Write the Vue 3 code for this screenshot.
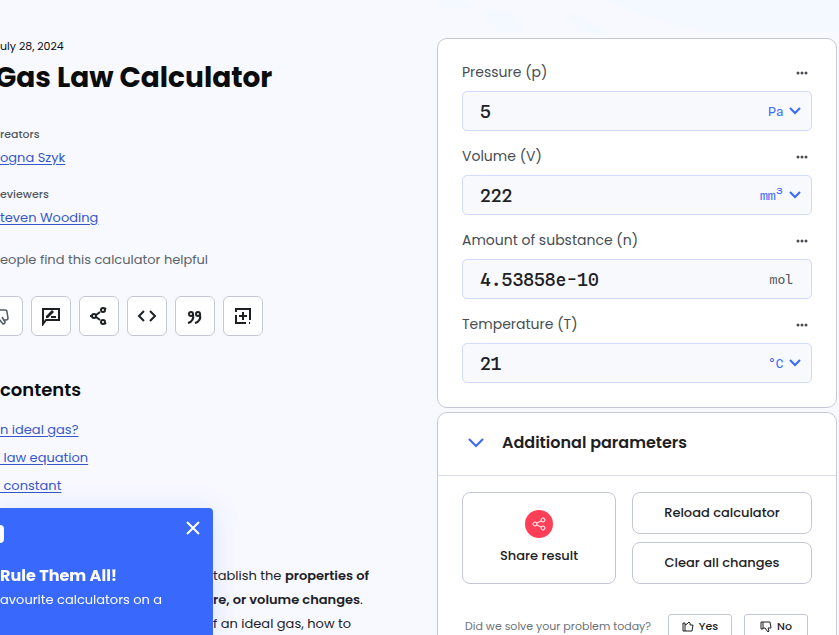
<script setup>
import { reactive } from 'vue'

const fields = reactive([
  { id: 'pressure', label: 'Pressure (p)', value: '5', unit: 'Pa', select: true },
  { id: 'volume', label: 'Volume (V)', value: '222', unit: 'mm³', select: true },
  { id: 'amount', label: 'Amount of substance (n)', value: '4.53858e-10', unit: 'mol', select: false },
  { id: 'temperature', label: 'Temperature (T)', value: '21', unit: '°C', select: true }
])
const links = ['n ideal gas?', '\u00a0law equation', '\u00a0constant']
</script>

<template>
  <div class="page">
    <svg class="backdrop" viewBox="0 0 402 38" aria-hidden="true">
      <path d="M0 0h28l10 9H10zM43 10h30l15 23H63zM128 14l18 2 24 18h-24zM171 0h231v31H263l-60-16z" />
    </svg>
    <main class="article">
      <p class="date">uly 28, 2024</p>
      <h1>Gas Law Calculator</h1>
      <div class="person">
        <span class="role">reators</span>
        <a href="#">ogna Szyk</a>
      </div>
      <div class="person">
        <span class="role">eviewers</span>
        <a href="#">teven Wooding</a>
      </div>
      <p class="helpful">eople find this calculator helpful</p>
      <div class="actions">
        <button class="cut" aria-label="Dislike">
          <svg viewBox="0 0 20 20"><path d="M1 4h14q2 0 2 2l1 6q0 2-2 2h-2M12 11l3 5q0 2-2 2l-4-5" /></svg>
        </button>
        <button aria-label="Feedback">
          <svg viewBox="0 0 20 20"><path d="M2 18V3h16v11H5z" /><path class="solid" d="M5 12v-2l6-6 2 2-6 6z" /><path d="M10 11h5" /></svg>
        </button>
        <button aria-label="Share">
          <svg viewBox="0 0 20 20"><circle cx="5" cy="10" r="2" /><circle cx="14" cy="4" r="2" /><circle cx="14" cy="16" r="2" /><path d="M1 10h2M7 9l4-3M7 11l4 3M16 3l1-1M16 17l1 1" /></svg>
        </button>
        <button aria-label="Embed">
          <svg viewBox="0 0 20 20"><path d="M7 5l-5 5 5 5M13 5l5 5-5 5" /></svg>
        </button>
        <button aria-label="Cite">
          <svg viewBox="0 0 20 20"><circle cx="6" cy="8" r="2" /><circle cx="13" cy="8" r="2" /><path d="M8 8c1 5-1 8-5 9M15 8c1 5-1 8-5 9" /></svg>
        </button>
        <button aria-label="Add to collection">
          <svg viewBox="0 0 20 20"><path d="M3 6V3h14v11M17 17h-1M13 17H3V9M10 6v8M6 10h8" /></svg>
        </button>
      </div>
      <h2>contents</h2>
      <nav>
        <a v-for="l in links" :key="l" href="#">{{ l }}</a>
      </nav>
      <p class="intro">
        tablish the <b>properties of</b><br />
        <b>re, or volume changes</b>.<br />
        f an ideal gas, how to
      </p>
    </main>

    <aside class="calculator">
      <section class="card fields">
        <div v-for="f in fields" :key="f.id" class="field">
          <div class="head">
            <label :for="f.id">{{ f.label }}</label>
            <button class="more" :aria-label="f.label + ' options'">
              <svg viewBox="0 0 12 4"><circle cx="2" cy="2" r="1.5" /><circle cx="6" cy="2" r="1.5" /><circle cx="10" cy="2" r="1.5" /></svg>
            </button>
          </div>
          <div class="box">
            <input :id="f.id" v-model="f.value" type="text" />
            <template v-if="f.select">
              <select v-model="f.unit" :aria-label="f.label + ' unit'">
                <option>{{ f.unit }}</option>
              </select>
              <svg class="chev" viewBox="0 0 12 8"><path d="M1 1l5 5 5-5" /></svg>
            </template>
            <span v-else class="unit">{{ f.unit }}</span>
          </div>
        </div>
      </section>

      <section class="card">
        <button class="toggle">
          <svg viewBox="0 0 16 10"><path d="M1 1l7 7 7-7" /></svg>
          Additional parameters
        </button>
        <div class="tools">
          <button class="share">
            <span class="dot">
              <svg viewBox="0 0 14 14"><circle cx="3" cy="7" r="2" /><circle cx="11" cy="3" r="2" /><circle cx="11" cy="11" r="2" /><path d="M5 6l4-2M5 8l4 2" /></svg>
            </span>
            Share result
          </button>
          <button>Reload calculator</button>
          <button>Clear all changes</button>
        </div>
        <div class="survey">
          <span>Did we solve your problem today?</span>
          <button>
            <svg viewBox="0 0 12 12"><path d="M1 2h2v8H1zM3 4l2-1 2-2 1 1v2h3l-1 6H3" /></svg>
            Yes
          </button>
          <button>
            <svg viewBox="0 0 12 12"><path d="M1 1h2v7H1zM3 1h7l1 6H8l1 3-1 1-3-4H3" /></svg>
            No
          </button>
        </div>
      </section>
    </aside>

    <div class="promo" role="dialog" aria-label="Rule Them All!">
      <div class="promo-top">
        <span class="badge"></span>
        <button aria-label="Close">
          <svg viewBox="0 0 14 14"><path d="M1 1l12 12M13 1L1 13" /></svg>
        </button>
      </div>
      <strong>Rule Them All!</strong>
      <span>avourite calculators on a</span>
    </div>
  </div>
</template>

<style>
body {
  margin: 0;
  background: #f8f9ff;
  overflow: hidden;
}
</style>

<style scoped>
.page {
  position: relative;
  display: grid;
  grid-template-columns: minmax(0, 1fr) 400px;
  gap: 24px;
  height: 100vh;
  padding: 38px 2px 0 0;
  box-sizing: border-box;
  overflow: hidden;
  font-family: Poppins, Inter, sans-serif;
  font-size: 13px;
  color: #1d2124;
}
p, h1, h2 { margin: 0; }
button {
  font: inherit;
  color: inherit;
  background: #fff;
  border: 1px solid #c4c7d8;
  border-radius: 6px;
  padding: 0;
  cursor: pointer;
}
svg {
  display: block;
  flex: none;
  fill: none;
  stroke: currentColor;
}
a {
  color: #3557cb;
  text-underline-offset: 2px;
}
.backdrop {
  position: absolute;
  top: 0;
  right: 0;
  width: 402px;
  height: 38px;
  fill: #f4f8ff;
  stroke: none;
}
.date { font-size: 11px; line-height: 16px; color: #0b0c0d; }
h1 {
  margin: 4px 0 27px;
  font-size: 28px;
  line-height: 40px;
  font-weight: 700;
  color: #0b0c0d;
  white-space: nowrap;
  text-indent: -5px;
}
.person {
  display: flex;
  flex-direction: column;
  gap: 3px;
  height: 60px;
}
.person a { line-height: 24px; }
.role { font-size: 11px; line-height: 18px; font-weight: 500; color: #535a60; }
.helpful { line-height: 24px; margin-top: 3px; color: #5b6268; }
.actions { display: flex; gap: 8px; margin-top: 24px; }
.actions button {
  display: flex;
  align-items: center;
  justify-content: center;
  width: 40px;
  height: 40px;
}
.actions svg { width: 20px; height: 20px; stroke-width: 2; }
.actions .cut {
  width: 23px;
  justify-content: flex-end;
  padding-right: 12px;
  border-left: 0;
  border-radius: 0 6px 6px 0;
  overflow: hidden;
  color: #535a60;
}
.actions .cut svg { stroke-width: 1.5; }
.solid { fill: currentColor; stroke: none; }
h2 { margin-top: 39px; font-size: 18px; line-height: 30px; font-weight: 600; color: #0b0c0d; }
nav { display: flex; flex-direction: column; gap: 4px; margin-top: 13px; }
nav a { line-height: 24px; }
.intro {
  margin-top: 66px;
  padding-left: 213px;
  line-height: 24px;
  white-space: nowrap;
}
b { font-weight: 600; }

.calculator { position: relative; display: flex; flex-direction: column; gap: 4px; }
.card { background: #fff; border: 1px solid #c4c7d8; border-radius: 10px; }
.fields { display: flex; flex-direction: column; gap: 16px; padding: 24px; }
.field { display: flex; flex-direction: column; gap: 8px; }
.head { display: flex; justify-content: space-between; align-items: center; height: 20px; }
.head label { color: #474d52; font-size: 14px; line-height: 18px; padding-bottom: 2px; }
.more { border: 0; padding: 4px; color: #474d52; }
.more svg { width: 12px; height: 4px; fill: currentColor; stroke: none; }
.box {
  display: flex;
  align-items: center;
  box-sizing: border-box;
  height: 40px;
  padding: 0 10px 0 17px;
  background: #f8f9fc;
  border: 1px solid #d0dbfe;
  border-radius: 5px;
  font-family: "Spline Sans Mono", "Space Mono", "DejaVu Sans Mono", "Liberation Mono", monospace;
}
.box input {
  flex: 1;
  min-width: 0;
  padding: 0;
  border: 0;
  background: none;
  font: inherit;
  font-size: 18px;
  font-weight: 500;
  color: #1d2124;
  outline: 0;
}
.box select {
  appearance: none;
  border: 0;
  padding: 0 5px 0 0;
  background: none;
  font: inherit;
  color: #3968fd;
}
.chev { width: 12px; height: 8px; color: #3968fd; stroke-width: 2; }
.unit { padding-right: 8px; color: #535a60; }
.toggle {
  display: flex;
  align-items: center;
  gap: 18px;
  width: 100%;
  height: 63px;
  padding: 0 30px 3px;
  border: 0;
  border-bottom: 1px solid #dcdfeb;
  border-radius: 10px 10px 0 0;
  font-size: 16px;
  font-weight: 600;
}
.toggle svg { width: 16px; height: 10px; color: #3968fd; stroke-width: 2; }
.tools {
  display: grid;
  grid-template-columns: 154fr 180fr;
  grid-auto-rows: 42px;
  gap: 8px 16px;
  padding: 16px 24px 30px;
  font-weight: 500;
}
.tools button { border-radius: 8px; }
.tools .share {
  grid-row: span 2;
  display: flex;
  flex-direction: column;
  align-items: center;
  justify-content: center;
  gap: 8px;
}
.dot {
  display: grid;
  place-items: center;
  width: 28px;
  height: 28px;
  border-radius: 50%;
  background: #ff3f58;
  color: #fff;
}
.dot svg { width: 14px; height: 14px; }
.survey {
  display: flex;
  align-items: center;
  gap: 12px;
  padding: 0 28px 24px 27px;
  font-size: 11px;
  color: #6b7177;
  white-space: nowrap;
}
.survey span { flex: 1; min-width: 0; }
.survey button {
  display: flex;
  flex: none;
  align-items: center;
  justify-content: center;
  gap: 5px;
  width: 64px;
  height: 25px;
  border-radius: 3px;
  font-weight: 500;
  color: #1d2124;
}
.survey svg { width: 12px; height: 12px; }

.promo {
  position: fixed;
  left: 0;
  bottom: 0;
  display: flex;
  flex-direction: column;
  box-sizing: border-box;
  width: 213px;
  height: 127px;
  background: #3968fd;
  border-radius: 0 4px 0 0;
  box-shadow: 0 4px 30px rgba(57, 104, 253, 0.16);
  color: #fff;
  line-height: 24px;
  white-space: nowrap;
}
.promo-top {
  display: flex;
  justify-content: space-between;
  align-items: flex-start;
  height: 43px;
  padding: 13px 13px 0 0;
}
.promo-top button { border: 0; background: none; }
.promo-top svg { width: 14px; height: 14px; stroke-width: 2; }
.badge { width: 4px; height: 18px; margin-top: 4px; background: #fff; border-radius: 0 4px 4px 0; }
.promo strong { font-size: 16px; font-weight: 700; }
</style>
